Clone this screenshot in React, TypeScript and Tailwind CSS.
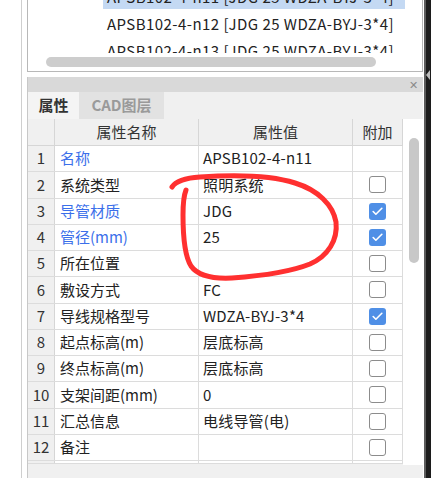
import { Check } from 'lucide-react';

type Row = { name: string; value: string; blue?: boolean; box?: boolean; checked?: boolean };

const rows: Row[] = [
  { name: '名称', value: 'APSB102-4-n11', blue: true },
  { name: '系统类型', value: '照明系统', box: true },
  { name: '导管材质', value: 'JDG', blue: true, box: true, checked: true },
  { name: '管径(mm)', value: '25', blue: true, box: true, checked: true },
  { name: '所在位置', value: '', box: true },
  { name: '敷设方式', value: 'FC', box: true },
  { name: '导线规格型号', value: 'WDZA-BYJ-3*4', box: true, checked: true },
  { name: '起点标高(m)', value: '层底标高', box: true },
  { name: '终点标高(m)', value: '层底标高', box: true },
  { name: '支架间距(mm)', value: '0', box: true },
  { name: '汇总信息', value: '电线导管(电)', box: true },
  { name: '备注', value: '', box: true },
];

const listItems = [
  'APSB102-4-n11 [JDG 25 WDZA-BYJ-3*4]',
  'APSB102-4-n12 [JDG 25 WDZA-BYJ-3*4]',
  'APSB102-4-n13 [JDG 25 WDZA-BYJ-3*4]',
];

function Box({ checked }: { checked?: boolean }) {
  if (checked) {
    return (
      <div className="w-[17px] h-[17px] rounded-[3px] bg-[#4f8fe6] flex items-center justify-center">
        <Check size={13} strokeWidth={3} className="text-white" />
      </div>
    );
  }
  return <div className="w-[17px] h-[17px] rounded-[3px] border border-[#8c8c8c] bg-white" />;
}

export default function App() {
  return (
    <div
      className="relative w-[431px] h-[478px] bg-white flex overflow-hidden text-[15px] text-[#222]"
      style={{ fontFamily: '"Noto Sans CJK SC", "Noto Sans", sans-serif' }}
    >
      {/* left margin */}
      <div className="w-[22px] h-full border-r border-[#cfcfcf] shrink-0" />
      <div className="w-[5px] shrink-0" />

      {/* main column */}
      <div className="w-[396px] h-full flex flex-col shrink-0">
        {/* top list panel */}
        <div className="h-[72px] border-l border-r border-b border-[#b8b8b8] flex flex-col shrink-0">
          <div className="h-[53px] overflow-hidden">
            <div className="-mt-[16px]">
              {listItems.map((t, i) => (
                <div key={t} className="h-[27px] pt-[2px] pl-[75px]">
                  <div
                    className={`h-[23px] w-[302px] px-[4px] flex items-center whitespace-nowrap tracking-[0.45px] ${
                      i === 0 ? 'bg-[#c4d9f3]' : ''
                    }`}
                  >
                    {t}
                  </div>
                </div>
              ))}
            </div>
          </div>
          <div className="h-[18px] pl-[18px] pt-[4px]">
            <div className="w-[330px] h-[10px] rounded-full bg-[#cdcdcd]" />
          </div>
        </div>

        <div className="h-[5px] shrink-0" />

        {/* properties panel */}
        <div className="flex-1 flex flex-col border-l border-[#c8c8c8] min-h-0">
          <div className="h-[15px] bg-[#d9d9d9] flex items-center justify-end pr-[5px] shrink-0">
            <span className="text-[11px] leading-none text-[#8a8a8a]">✕</span>
          </div>

          <div className="h-[27px] bg-[#f0f0f0] flex shrink-0">
            <div className="w-[51px] flex items-center justify-center bg-[#f4f4f4] font-bold text-[#333]">属性</div>
            <div className="w-[85px] flex items-center justify-center bg-[#e2e2e2] font-bold text-[#9a9a9a]">CAD图层</div>
          </div>

          <div className="flex flex-1 min-h-0">
            <div className="w-[375px] flex flex-col shrink-0 overflow-hidden">
              <div className="h-[27px] flex bg-[#f0f0f0] border-b border-[#d6d6d6] shrink-0 text-[#333]">
                <div className="w-[27px] border-r border-[#d6d6d6]" />
                <div className="w-[144px] border-r border-[#d6d6d6] flex items-center justify-center">属性名称</div>
                <div className="w-[154px] border-r border-[#d6d6d6] flex items-center justify-center">属性值</div>
                <div className="w-[50px] border-r border-[#d6d6d6] flex items-center justify-center">附加</div>
              </div>
              {rows.map((r, i) => (
                <div key={r.name} className="h-[26.25px] flex border-b border-[#dcdcdc] shrink-0">
                  <div className="w-[27px] bg-[#f0f0f0] border-r border-[#d6d6d6] flex items-center justify-center text-[#333]">
                    {i + 1}
                  </div>
                  <div
                    className={`w-[144px] border-r border-[#dcdcdc] flex items-center pl-[5px] whitespace-nowrap ${
                      r.blue ? 'text-[#3b6fea]' : ''
                    }`}
                  >
                    {r.name}
                  </div>
                  <div className="w-[154px] border-r border-[#dcdcdc] flex items-center pl-[4px] whitespace-nowrap tracking-[0.2px]">
                    {r.value}
                  </div>
                  <div className="w-[50px] border-r border-[#dcdcdc] flex items-center justify-center">
                    {r.box && <Box checked={r.checked} />}
                  </div>
                </div>
              ))}
              <div className="h-[3px] flex border-b border-[#dcdcdc] shrink-0">
                <div className="w-[27px] bg-[#f0f0f0] border-r border-[#d6d6d6]" />
                <div className="w-[144px] border-r border-[#dcdcdc]" />
                <div className="w-[154px] border-r border-[#dcdcdc]" />
                <div className="w-[50px] border-r border-[#dcdcdc]" />
              </div>
              <div className="flex-1 bg-[#f0f0f0]" />
            </div>

            {/* vertical scrollbar */}
            <div className="flex-1 flex flex-col">
              <div className="flex-1 bg-white pl-[6px] pt-[19px]">
                <div className="w-[10px] h-[125px] rounded-full bg-[#c8c8c8]" />
              </div>
              <div className="h-[13px] bg-[#f0f0f0]" />
            </div>
          </div>
        </div>
      </div>

      <div className="w-[1px] shrink-0" />
      {/* dark edge of neighbouring window */}
      <div className="relative flex-1 h-full bg-[#1c1c1c] border-l-2 border-[#5c5c5c]">
        <div className="absolute left-0 top-[70px] w-0 h-0 border-y-[5px] border-y-transparent border-r-[4px] border-r-[#bdbdbd]" />
      </div>

      {/* red hand-drawn annotation */}
      <svg className="absolute inset-0 pointer-events-none" width="431" height="478">
        <path
          d="M172,187 C176,181 185,178 200,177 C230,175 270,175 295,183 C318,190 333,205 336,222 C338,240 328,256 310,264 C290,272 260,276 232,278 C212,279 198,276 191,266 C184,255 183,235 183,215 C183,202 184,195 186,190"
          fill="none"
          stroke="#ff3030"
          strokeWidth="5"
          strokeLinecap="round"
          strokeLinejoin="round"
        />
      </svg>
    </div>
  );
}
